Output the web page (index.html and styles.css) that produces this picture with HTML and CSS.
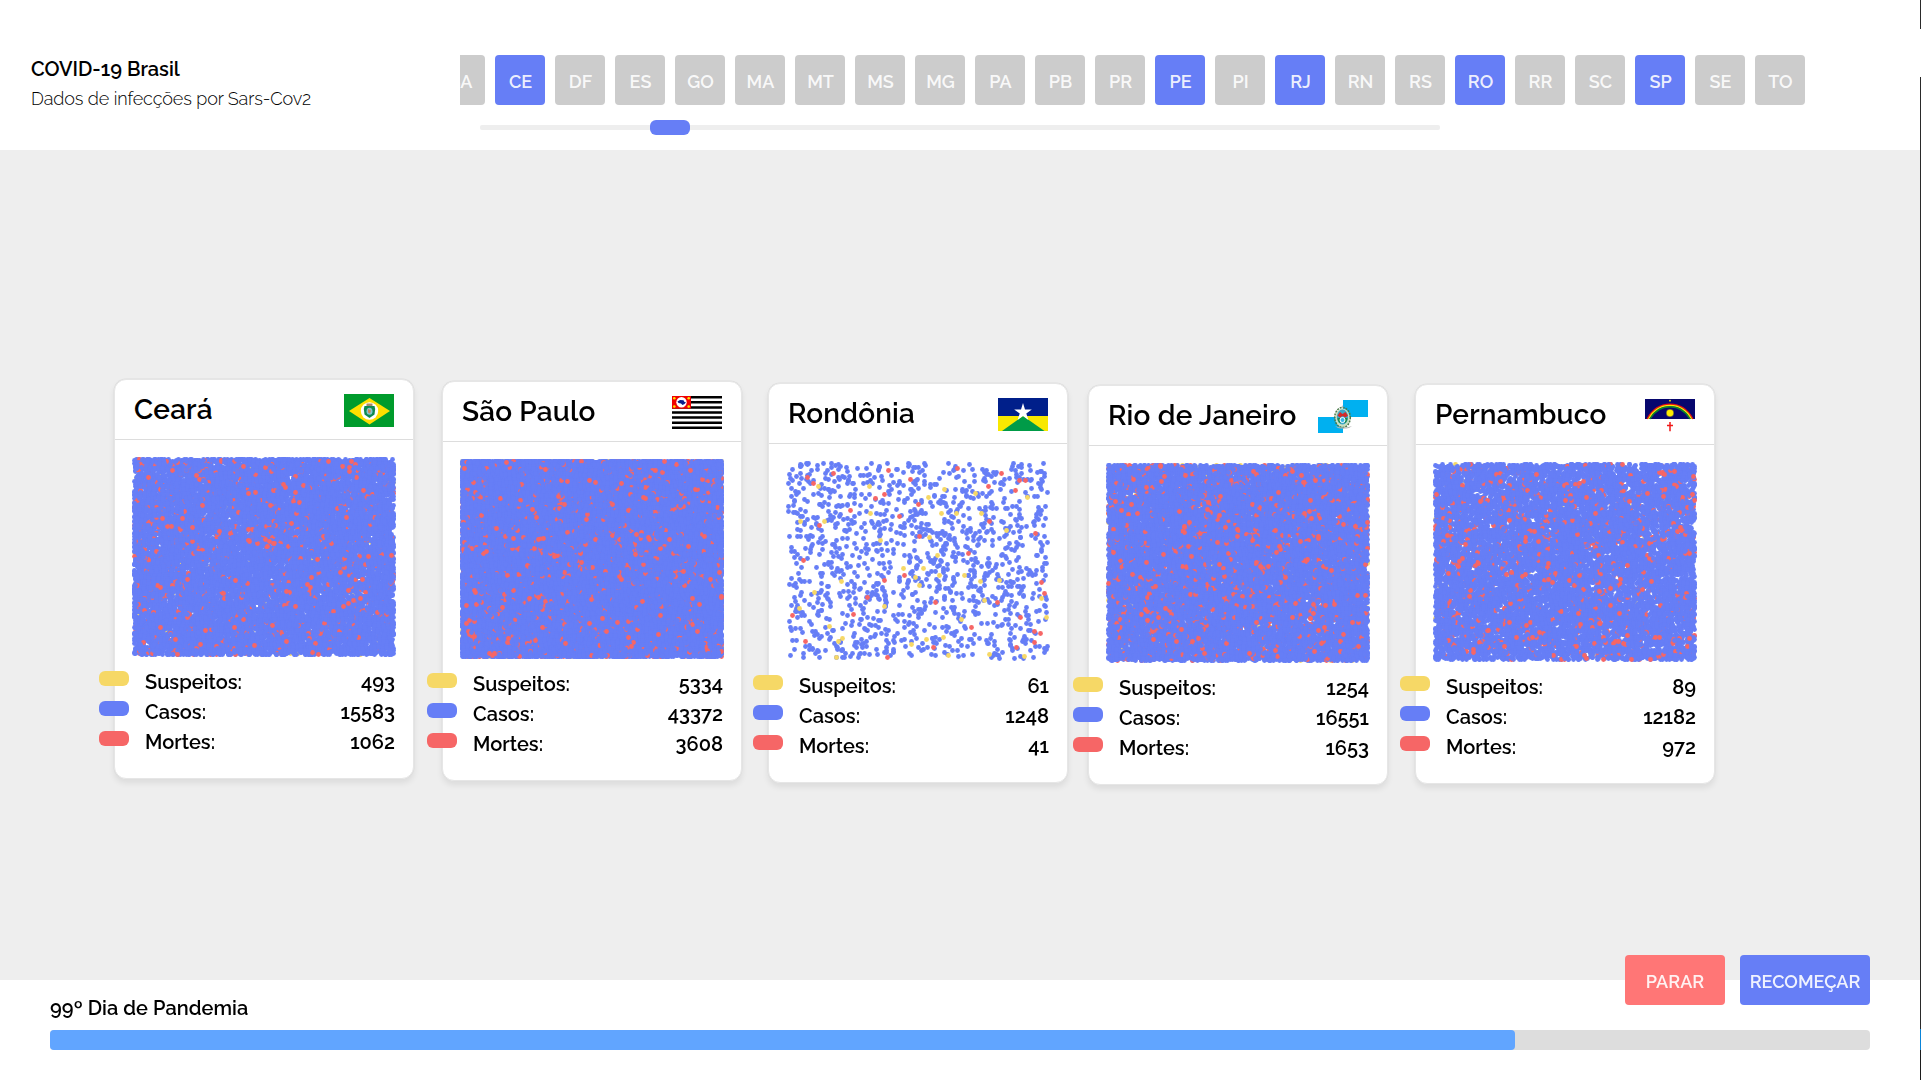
FILE: index.html
```html
<!DOCTYPE html>
<html lang="pt-BR">
<head>
<meta charset="utf-8">
<title>COVID-19 Brasil</title>
<link rel="stylesheet" href="styles.css">
</head>
<body>
<div class="app">
  <header class="header">
    <div class="brand">
      <h1 class="brand-title">COVID-19 Brasil</h1>
      <p class="brand-sub">Dados de infecções por Sars-Cov2</p>
    </div>
    <div class="picker">
      <nav class="states">
        <button class="state">BA</button>
        <button class="state on">CE</button>
        <button class="state">DF</button>
        <button class="state">ES</button>
        <button class="state">GO</button>
        <button class="state">MA</button>
        <button class="state">MT</button>
        <button class="state">MS</button>
        <button class="state">MG</button>
        <button class="state">PA</button>
        <button class="state">PB</button>
        <button class="state">PR</button>
        <button class="state on">PE</button>
        <button class="state">PI</button>
        <button class="state on">RJ</button>
        <button class="state">RN</button>
        <button class="state">RS</button>
        <button class="state on">RO</button>
        <button class="state">RR</button>
        <button class="state">SC</button>
        <button class="state on">SP</button>
        <button class="state">SE</button>
        <button class="state">TO</button>
      </nav>
      <div class="track"><div class="thumb"></div></div>
    </div>
  </header>

  <main class="board">
    <section class="card ce">
      <div class="card-head">
        <h2>Ceará</h2>
        <svg class="flag" viewBox="0 0 50 33">
          <rect width="50" height="33" fill="#009b2c"/>
          <path d="M5 17 25.500 4 46 17 25.500 30.500Z" fill="#fedf00"/>
          <circle cx="25.500" cy="17" r="8.700" fill="#fff"/>
          <path d="M22.500 9.500h6v2.500h-6z" fill="#a58a6a"/>
          <path d="M20.500 12h10l.7 3-.7 5.500-5 3.500-5-3.500-.7-5.500z" fill="#0e8a50"/>
          <ellipse cx="25.500" cy="17.300" rx="3" ry="3.500" fill="#7fc4d0"/>
          <path d="M24 15l3 1.500-1 3-2-1z" fill="#c8845c"/>
        </svg>
      </div>
      <canvas class="dots" width="266" height="202" data-s="493" data-c="15583" data-m="1062"></canvas>
      <ul class="stats">
        <li><i class="pill sus"></i><span>Suspeitos:</span><b>493</b></li>
        <li><i class="pill cas"></i><span>Casos:</span><b>15583</b></li>
        <li><i class="pill mor"></i><span>Mortes:</span><b>1062</b></li>
      </ul>
    </section>

    <section class="card sp">
      <div class="card-head">
        <h2>São Paulo</h2>
        <svg class="flag" viewBox="0 0 50 33">
          <rect width="50" height="33" fill="#fff"/>
          <path d="M0 1.250h50M0 6.330h50M0 11.400h50M0 16.500h50M0 21.600h50M0 26.700h50M0 31.750h50" stroke="#000" stroke-width="2.540"/>
          <rect width="19" height="12.700" fill="#f00000"/>
          <circle cx="9.500" cy="6.300" r="5.200" fill="#fff"/>
          <path d="M5.500 5.500 8 4l3.500.3 1 1.700 1.500.3-1.500 1.700L10.500 9 9 7.500 6.500 7z" fill="#0a1c8c"/>
          <g fill="#ffe500"><circle cx="2.300" cy="2.200" r="1.300"/><circle cx="16.700" cy="2.200" r="1.300"/><circle cx="2.300" cy="10.500" r="1.300"/><circle cx="16.700" cy="10.500" r="1.300"/></g>
        </svg>
      </div>
      <canvas class="dots" width="266" height="202" data-s="5334" data-c="43372" data-m="3608"></canvas>
      <ul class="stats">
        <li><i class="pill sus"></i><span>Suspeitos:</span><b>5334</b></li>
        <li><i class="pill cas"></i><span>Casos:</span><b>43372</b></li>
        <li><i class="pill mor"></i><span>Mortes:</span><b>3608</b></li>
      </ul>
    </section>

    <section class="card ro">
      <div class="card-head">
        <h2>Rondônia</h2>
        <svg class="flag" viewBox="0 0 50 33">
          <rect width="50" height="18" fill="#001f8a"/>
          <rect y="18" width="50" height="15" fill="#f8e800"/>
          <path d="M4 33 25 18 46.500 33Z" fill="#009b48"/>
          <path d="M25 5l2 6.500h6.800l-5.500 4 2.100 6.500L25 18l-5.400 4 2.100-6.500-5.500-4H23z" fill="#fff"/>
        </svg>
      </div>
      <canvas class="dots" width="266" height="202" data-s="61" data-c="1248" data-m="41" data-places="ro"></canvas>
      <ul class="stats">
        <li><i class="pill sus"></i><span>Suspeitos:</span><b>61</b></li>
        <li><i class="pill cas"></i><span>Casos:</span><b>1248</b></li>
        <li><i class="pill mor"></i><span>Mortes:</span><b>41</b></li>
      </ul>
    </section>

    <section class="card rj">
      <div class="card-head">
        <h2>Rio de Janeiro</h2>
        <svg class="flag" viewBox="0 0 50 33">
          <rect width="50" height="33" fill="#fff"/>
          <path d="M25 0h25v17H25zM0 17h25v16H0z" fill="#00b0f0"/>
          <ellipse cx="24.500" cy="18" rx="7.300" ry="9.500" fill="#c9dfc2"/>
          <ellipse cx="24.500" cy="17.500" rx="7.800" ry="10" fill="none" stroke="#4c7a4a" stroke-width="1.500" stroke-dasharray="2 1"/>
          <ellipse cx="24.500" cy="17" rx="5.600" ry="7.500" fill="#3ba7c8"/>
          <path d="M19.500 15.500 22 12l2.500 2 3-2 2.500 3.500-2.500 2-3-1.500-2.500 1.500z" fill="#d42a2a"/>
          <path d="M19.500 18h3v5.500c-2-1-3-3-3-5.500zM29.500 18h-3v5.500c2-1 3-3 3-5.500z" fill="#1f8a4c"/>
          <circle cx="24.500" cy="20" r="2.500" fill="#38b7e8" stroke="#fff"/>
          <path d="M24.500 5l1 2.500h-2z" fill="#bbb"/>
          <path d="M17 26q7.500 3 17 0l-3 2q-6 1-11 0z" fill="#b8b8b8"/>
        </svg>
      </div>
      <canvas class="dots" width="266" height="202" data-s="1254" data-c="16551" data-m="1653"></canvas>
      <ul class="stats">
        <li><i class="pill sus"></i><span>Suspeitos:</span><b>1254</b></li>
        <li><i class="pill cas"></i><span>Casos:</span><b>16551</b></li>
        <li><i class="pill mor"></i><span>Mortes:</span><b>1653</b></li>
      </ul>
    </section>

    <section class="card pe">
      <div class="card-head">
        <h2>Pernambuco</h2>
        <svg class="flag" viewBox="0 0 50 33">
          <rect width="50" height="33" fill="#fff"/>
          <rect width="50" height="20" fill="#07076e"/>
          <g fill="none" stroke-width="1.400">
            <path d="M2.100 20Q10 5.200 25 5.200T47.900 20" stroke="#e81010"/>
            <path d="M3.500 20Q11 6.500 25 6.500T46.500 20" stroke="#ffe600"/>
            <path d="M4.900 20Q12 7.800 25 7.800T45.100 20" stroke="#0a8a2a"/>
          </g>
          <circle cx="25" cy="14" r="4" fill="#ffee00" opacity=".45"/>
          <circle cx="25" cy="14" r="3.200" fill="#ffee00"/>
          <circle cx="25" cy="1.700" r=".9" fill="#ffee00"/>
          <path d="M25 23v9.300M22 26.600h6" stroke="#f01818" stroke-width="1.500"/>
        </svg>
      </div>
      <canvas class="dots" width="266" height="202" data-s="89" data-c="12182" data-m="972"></canvas>
      <ul class="stats">
        <li><i class="pill sus"></i><span>Suspeitos:</span><b>89</b></li>
        <li><i class="pill cas"></i><span>Casos:</span><b>12182</b></li>
        <li><i class="pill mor"></i><span>Mortes:</span><b>972</b></li>
      </ul>
    </section>
  </main>

  <footer class="footer">
    <div class="footer-row">
      <p class="day">99º Dia de Pandemia</p>
      <div class="actions">
        <button class="action stop">PARAR</button>
        <button class="action restart">RECOMEÇAR</button>
      </div>
    </div>
    <div class="progress"><div class="progress-fill" style="width:1465px"></div></div>
  </footer>
</div>
<div class="edge"></div>
<script src="dots.js"></script>
</body>
</html>
```
FILE: dots.js
```js
// Each person is one dot; the generator is seeded so that every load draws the same cloud.
var COLORS = { s: '#f6d866', c: '#667ef6', m: '#f66666' };

var PLACES = {
  ro: {
    m: [22,17,28,23,48,13,103,10,172,8,216,13,203,26,234,20,240,20,230,30,90,38,99,34,133,44,65,50,34,65,114,56,204,61,250,73,134,76,183,93,18,100,119,115,99,120,256,122,82,137,150,142,212,142,7,155,68,154,235,157,186,167,249,171,255,173,249,182,20,181,148,187,231,187,102,197,125,19,259,133],
    s: [84,26,143,37,190,33,242,37,85,53,156,53,171,53,196,53,15,61,39,61,221,70,95,80,144,77,152,95,118,108,138,108,130,117,134,125,154,115,179,115,195,121,214,120,56,121,29,132,199,140,14,148,99,146,176,159,261,157,44,166,57,178,53,181,126,184,141,179,158,177,51,197,163,195,204,194,239,196,256,138,33,26,159,29]
  }
};

function generator(seed) {
  return function () {
    seed = (seed + 0x6D2B79F5) | 0;
    var t = Math.imul(seed ^ (seed >>> 15), 1 | seed);
    t = (t + Math.imul(t ^ (t >>> 7), 61 | t)) ^ t;
    return ((t ^ (t >>> 14)) >>> 0) / 4294967296;
  };
}

document.querySelectorAll('.dots').forEach(function (canvas) {
  var ctx = canvas.getContext('2d');
  var data = canvas.dataset;
  var s = +data.s, c = +data.c, m = +data.m;
  var random = generator(c);

  function dot(x, y, kind) {
    ctx.fillStyle = COLORS[kind];
    ctx.beginPath();
    ctx.arc(x + 0.5, y + 0.5, 2.4, 0, Math.PI * 2);
    ctx.fill();
  }
  function scatter(kind) {
    dot(3 + Math.floor(random() * 260), 3 + Math.floor(random() * 196), kind);
  }

  if (data.places) {
    for (var i = 0; i < c; i++) scatter('c');
    ['s', 'm'].forEach(function (kind) {
      var p = PLACES[data.places][kind];
      for (var k = 0; k < p.length; k += 2) dot(p[k], p[k + 1], kind);
    });
    return;
  }

  for (var j = 0; j < s; j++) scatter('s');
  while (c + m > 0) {
    if (random() * (c + m) < m) { scatter('m'); m--; }
    else { scatter('c'); c--; }
  }
});
```
FILE: styles.css
```css
* { box-sizing: border-box; margin: 0; padding: 0; }
body {
  display: flex;
  width: 1921px;
  height: 1080px;
  overflow: hidden;
  font-family: Raleway, "Open Sans", sans-serif;
  font-weight: 600;
  color: #000;
  background: #fff;
}
button { border: 0; font: inherit; font-size: 18px; color: rgba(255, 255, 255, .9); }
.app { display: flex; flex-direction: column; width: 1920px; }
.edge {
  width: 1px;
  background: linear-gradient(#2a2a2a 29px, #fff 29px 77px, #2a2a2a 77px 1029px, #0a84d8 1029px 1050px, #1c1c1c 1050px);
}

.header { display: flex; height: 150px; }
.brand { width: 460px; padding: 54px 0 0 31px; }
.brand-title { font-size: 20px; font-weight: 600; line-height: 30px; }
.brand-sub { font-size: 18px; font-weight: 300; line-height: 30px; letter-spacing: -.11px; }
.picker { width: 1380px; padding-top: 55px; overflow: hidden; }
.states { display: flex; gap: 10px; margin-left: -25px; }
.state { flex: none; width: 50px; height: 50px; padding: 3px 0 0 1px; border-radius: 4px; background: #ccc; text-align: center; }
.state.on { background: #667ef6; }
.track { position: relative; width: 960px; height: 5px; margin: 20px 0 0 20px; border-radius: 2px; background: #eee; }
.thumb { position: absolute; left: 170px; top: -5px; width: 40px; height: 15px; border-radius: 6px; background: #667ef6; }

.board { display: flex; align-items: flex-start; height: 830px; padding-left: 114px; background: #eee; }
.card {
  flex: none;
  width: 300px;
  height: 400px;
  border: 1px solid #e6e6e6;
  border-radius: 12px;
  background: #fff;
  box-shadow: 0 0 0 .5px #ddd, 0 4px 6px rgba(0, 0, 0, .08);
}
.ce { margin-top: 229px; }
.sp { margin: 231px 0 0 28px; }
.ro { margin: 233px 0 0 26px; }
.rj { margin: 235px 0 0 20px; }
.pe { margin: 234px 0 0 27px; }
.card-head { display: flex; justify-content: space-between; height: 60px; padding: 0 19px; border-bottom: 1px solid #ddd; }
.card-head h2 { font-size: 28px; font-weight: 600; line-height: 60px; letter-spacing: .18px; white-space: nowrap; }
.flag { flex: none; width: 50px; height: 33px; margin-top: 14px; }
.dots { display: block; width: 266px; height: 202px; margin: 16px 0 0 16px; }
.stats { list-style: none; margin-top: 9px; padding: 0 18px 0 0; font-size: 20px; line-height: 31px; }
.stats li { display: flex; height: 30px; }
.stats span { flex: 1; }
.stats b { font-weight: 600; }
.pill { flex: none; width: 30px; height: 15px; margin: 4px 16px 0 -16px; border-radius: 6px; }
.sus { background: #f6d866; }
.cas { background: #667ef6; }
.mor { background: #f66666; }

.footer { height: 100px; padding: 0 50px; }
.footer-row { display: flex; justify-content: space-between; height: 50px; }
.day { padding-top: 13px; font-size: 20px; line-height: 30px; letter-spacing: .06px; }
.actions { display: flex; gap: 15px; margin-top: -25px; }
.action { height: 50px; padding-top: 3px; border-radius: 4px; }
.stop { width: 100px; background: #ff7676; }
.restart { width: 130px; background: #667ef6; }
.progress { height: 20px; border-radius: 4px; background: #ddd; }
.progress-fill { height: 20px; border-radius: 4px; background: #61a5ff; }
```
